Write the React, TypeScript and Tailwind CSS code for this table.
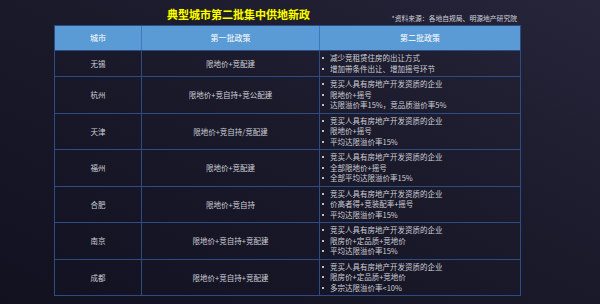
import React from "react";

type Linha = {
  cidade: string;
  primeiro: string;
  segundo: string[];
};

const linhas: Linha[] = [
  {
    cidade: "无锡",
    primeiro: "限地价+竞配建",
    segundo: ["减少竞租赁住房的出让方式", "增加带条件出让、增加摇号环节"],
  },
  {
    cidade: "杭州",
    primeiro: "限地价+竞自持+竞公配建",
    segundo: ["竞买人具有房地产开发资质的企业", "限地价+摇号", "达限溢价率15%，竞品质溢价率5%"],
  },
  {
    cidade: "天津",
    primeiro: "限地价+竞自持/竞配建",
    segundo: ["竞买人具有房地产开发资质的企业", "限地价+摇号", "平均达限溢价率15%"],
  },
  {
    cidade: "福州",
    primeiro: "限地价+竞配建",
    segundo: ["竞买人具有房地产开发资质的企业", "全部限地价+摇号", "全部平均达限溢价率15%"],
  },
  {
    cidade: "合肥",
    primeiro: "限地价+竞自持",
    segundo: ["竞买人具有房地产开发资质的企业", "价高者得+竞装配率+摇号", "平均达限溢价率15%"],
  },
  {
    cidade: "南京",
    primeiro: "限地价+竞自持+竞配建",
    segundo: ["竞买人具有房地产开发资质的企业", "限房价+定品质+竞地价", "平均达限溢价率15%"],
  },
  {
    cidade: "成都",
    primeiro: "限地价+竞自持+竞配建",
    segundo: ["竞买人具有房地产开发资质的企业", "限房价+定品质+竞地价", "多宗达限溢价率<10%"],
  },
];

const fonte = "font-['Noto_Sans_CJK_SC','Noto_Sans',sans-serif]";

export default function App() {
  return (
    <div
      className={`w-[600px] h-[304px] overflow-hidden bg-[linear-gradient(to_bottom_left,#26253a,#1a1a2b_45%,#111120)] ${fonte}`}
    >
      <div className="ml-[54px] w-[467px]">
        <div className="flex h-[25px] items-center">
          <div className="ml-[113px] w-[160px] pt-[4px] text-[11px] font-bold leading-none text-[#ffff00] [text-shadow:0_0_2px_#3a3a00]">
            典型城市第二批集中供地新政
          </div>
          <div className="ml-auto mr-[4px] pt-[11px] text-[6.8px] leading-none text-[#d0d0d8]">
            *资料来源：各地自规局、明源地产研究院
          </div>
        </div>

        <div className="border border-[#2f4b86]">
          <div className="grid h-[24px] grid-cols-[87px_178px_1fr] bg-[#5b9bd5] text-[8px] text-white">
            <div className="flex items-center justify-center border-r border-[#3f78bc]">城市</div>
            <div className="flex items-center justify-center border-r border-[#3f78bc]">第一批政策</div>
            <div className="flex items-center justify-center">第二批政策</div>
          </div>

          {linhas.map((linha) => (
            <div
              key={linha.cidade}
              className="grid grid-cols-[87px_178px_1fr] border-t border-[#2f4b86] text-[7.5px] text-[#cdcdd5]"
            >
              <div className="flex items-center justify-center border-r border-[#2f4b86]">
                {linha.cidade}
              </div>
              <div className="flex items-center justify-center border-r border-[#2f4b86]">
                {linha.primeiro}
              </div>
              <div className="flex flex-col py-[2px] pl-[2px] leading-[10.5px]">
                {linha.segundo.map((item) => (
                  <div key={item} className="flex items-center">
                    <span className="mr-[6px] h-[2px] w-[2px] bg-[#c0c0c8]" />
                    <span>{item}</span>
                  </div>
                ))}
              </div>
            </div>
          ))}
        </div>
      </div>
    </div>
  );
}
